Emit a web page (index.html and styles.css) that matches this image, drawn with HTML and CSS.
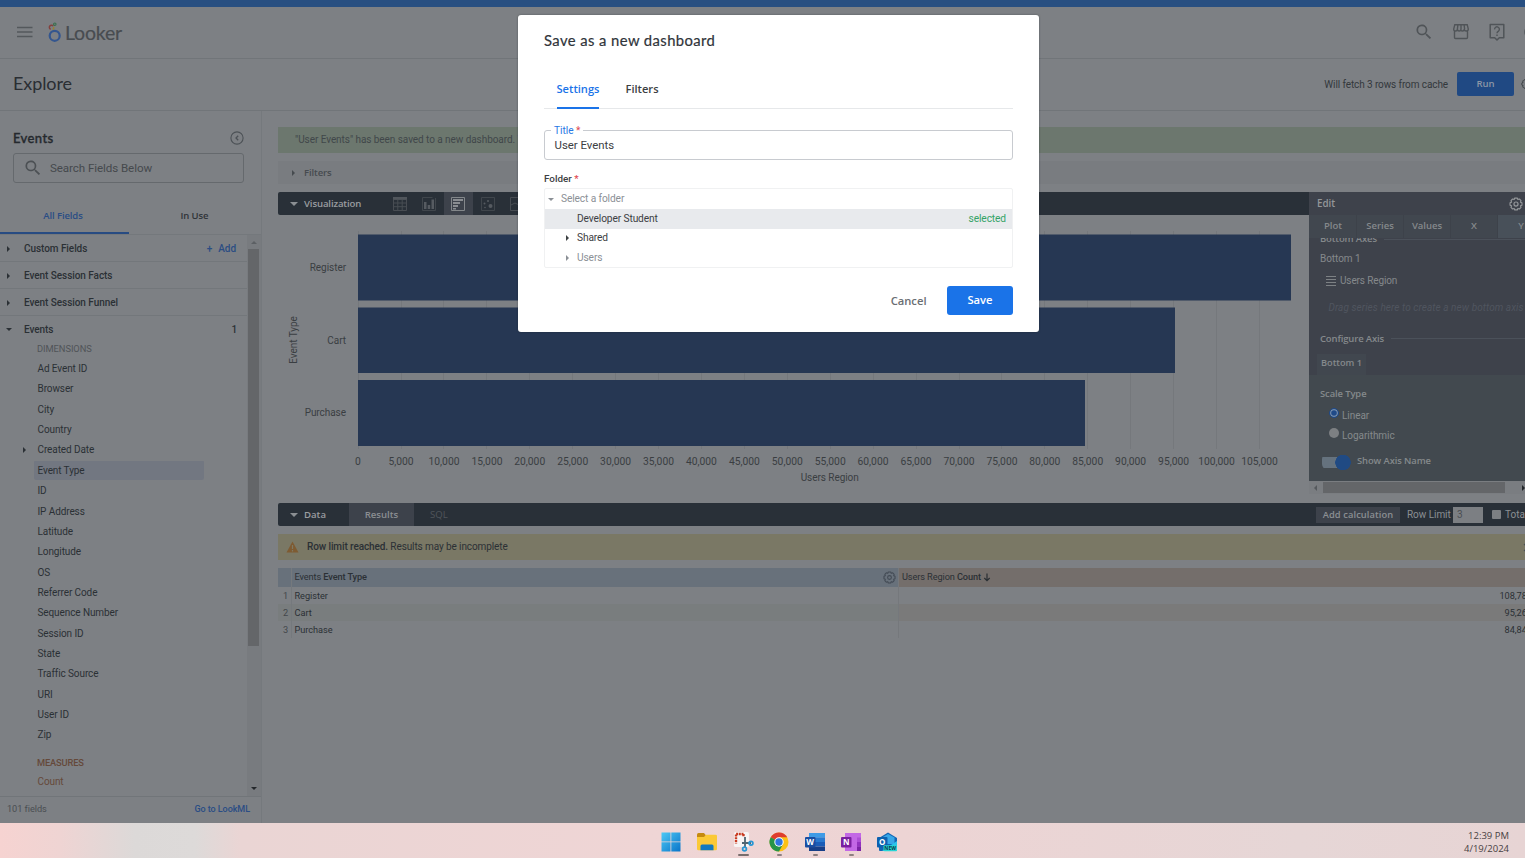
FILE: index.html
```html
<!DOCTYPE html>
<html lang="en">
<head>
<meta charset="utf-8">
<title>Looker - Explore</title>
<link rel="stylesheet" href="styles.css">
</head>
<body>
<svg class="defs" width="0" height="0">
  <symbol id="search" viewBox="0 0 24 24"><path d="M15.500 14h-.8l-.3-.3a6.500 6.500 0 1 0-.7.700l.3.300v.8l5 5 1.500-1.500zm-6 0a4.500 4.500 0 1 1 0-9 4.500 4.500 0 0 1 0 9z"/></symbol>
  <symbol id="gear" viewBox="0 0 24 24"><path fill="none" stroke="currentColor" stroke-width="2" stroke-linejoin="round" d="M9.800 1.800h4.400l1 2.500 2.700-.9 2.700 2.700-.9 2.700 2.500 1v4.400l-2.500 1 .9 2.700-2.700 2.700-2.700-.9-1 2.500H9.800l-1-2.500-2.700.9-2.700-2.700.9-2.700-2.500-1V9.800l2.500-1-.9-2.700 2.700-2.700 2.700.9z"/><circle cx="12" cy="12" r="3.500" fill="none" stroke="currentColor" stroke-width="2"/></symbol>
</svg>
<div class="app">
  <div class="strip"></div>
  <header class="header">
    <svg class="burger" width="16" height="12" viewBox="0 0 16 12"><path d="M0 1.500h15.500M0 6h15.500M0 10.500h15.500" stroke="#54585c" stroke-width="1.300"/></svg>
    <svg class="logo" width="14" height="21" viewBox="0 0 14 21"><circle cx="6.700" cy="13.800" r="5" fill="none" stroke="#34568f" stroke-width="2.200"/><path d="M2.700 7.300a2.100 2.100 0 1 1 2.500-3.100" fill="none" stroke="#84413e" stroke-width="1.500"/><path d="M5.400 4.800a2 2 0 0 1-.8 2.700" fill="none" stroke="#94803a" stroke-width="1.500"/><circle cx="6.800" cy="2.200" r="1.200" fill="none" stroke="#3b7050" stroke-width="1.200"/></svg>
    <span class="brand">Looker</span>
    <div class="header-icons">
      <svg width="20" height="20"><use href="#search"/></svg>
      <svg width="18" height="18" viewBox="0 0 18 18"><path d="M2.500 8v6.500q0 1 1 1h11q1 0 1-1V8M2.800 1.700h12.400L16.300 6q0 2-2 2t-2-2q0 2-1.900 2T9 6q0 2-1.800 2t-1.800-2q0 2-1.900 2t-1.800-2zM5.900 1.700L5.400 6M9 1.700V6M12.100 1.700l.5 4.300" fill="none" stroke="#505458" stroke-width="1.400"/></svg>
      <svg width="18" height="20" viewBox="0 0 18 20"><path d="M2.200 2.500h13.600v13.200h-4.500L9 18l-2.300-2.300H2.200z" fill="none" stroke="#505458" stroke-width="1.500" stroke-linejoin="round"/><path d="M6.600 7.400a2.400 2.400 0 1 1 3.900 1.700Q9 10.200 9 11.300M9 12.500V14" fill="none" stroke="#505458" stroke-width="1.400"/></svg>
      <svg width="14" height="14" viewBox="0 0 14 14"><circle cx="7" cy="7" r="6" fill="none" stroke="#505458" stroke-width="1.500"/></svg>
    </div>
  </header>
  <div class="titlebar">
    <h1 class="page-title">Explore</h1>
    <span class="fetch">Will fetch 3 rows from cache</span>
    <span class="run">Run</span>
    <svg class="cut-gear" width="12" height="12"><use href="#gear"/></svg>
  </div>
  <div class="body">
    <aside class="side">
      <div class="side-head"><span class="side-title">Events</span>
        <svg width="14" height="14" viewBox="0 0 14 14"><circle cx="7" cy="7" r="6.100" fill="none" stroke="#4c5156" stroke-width="1.100"/><path d="M8.200 4.700L6 7l2.200 2.300" fill="none" stroke="#4c5156" stroke-width="1.300"/></svg>
      </div>
      <div class="search"><svg width="20" height="20"><use href="#search"/></svg><span>Search Fields Below</span></div>
      <div class="side-tabs"><span class="side-tab on">All Fields</span><span class="side-tab">In Use</span></div>
      <div class="side-body">
        <div class="list">
          <div class="group"><i class="tri right"></i><span>Custom Fields</span><span class="add"><b>+</b>Add</span></div>
          <div class="group"><i class="tri right"></i><span>Event Session Facts</span></div>
          <div class="group"><i class="tri right"></i><span>Event Session Funnel</span></div>
          <div class="group open"><i class="tri down"></i><span>Events</span><span class="count">1</span></div>
          <div class="label">DIMENSIONS</div>
          <div class="field">Ad Event ID</div>
          <div class="field">Browser</div>
          <div class="field">City</div>
          <div class="field">Country</div>
          <div class="field nested"><i class="tri right"></i>Created Date</div>
          <div class="field sel">Event Type</div>
          <div class="field">ID</div>
          <div class="field">IP Address</div>
          <div class="field">Latitude</div>
          <div class="field">Longitude</div>
          <div class="field">OS</div>
          <div class="field">Referrer Code</div>
          <div class="field">Sequence Number</div>
          <div class="field">Session ID</div>
          <div class="field">State</div>
          <div class="field">Traffic Source</div>
          <div class="field">URI</div>
          <div class="field">User ID</div>
          <div class="field">Zip</div>
          <div class="label measures">MEASURES</div>
          <div class="field measure">Count</div>
        </div>
        <div class="vscroll"><i class="tri up"></i><div class="vthumb"></div><i class="tri down"></i></div>
      </div>
      <div class="side-foot"><span>101 fields</span><span class="link">Go to LookML</span></div>
    </aside>
    <main class="main">
      <div class="banner">"User Events" has been saved to a new dashboard. <span class="link">View</span></div>
      <div class="filters"><i class="tri right"></i><span>Filters</span></div>
      <div class="viz">
        <div class="viz-left">
          <div class="bar"><i class="tri down"></i><span class="bar-title viz-title">Visualization</span>
            <div class="viz-icons">
              <span><svg width="14" height="14" viewBox="0 0 14 14"><path d="M.5.500h13v13H.5zM.5 2.500h13M.5 6h13M.5 9.700h13M4.800 2v11.500M9.200 2v11.500" fill="none" stroke="#484d53"/><path d="M0 0h14v2.500H0z" fill="#51565c"/></svg></span>
              <span><svg width="14" height="14" viewBox="0 0 14 14"><path d="M13.500 1v12.500H.5V.5h10" fill="none" stroke="#40464c"/><path d="M2 5h2.500v7H2zM5.700 8h2.500v4H5.700zM9.500 2.500H12V12H9.500z" fill="#565b61"/></svg></span>
              <span class="on"><svg width="14" height="14" viewBox="0 0 14 14"><path d="M.5.500h13v13H.5z" fill="none" stroke="#83878a"/><path d="M2 2h10v2H2zM2 5h7v2H2zM2 8h5v2H2zM2 11h3v1.500H2z" fill="#8a8d91"/></svg></span>
              <span><svg width="14" height="14" viewBox="0 0 14 14"><path d="M.5.500h13v13H.5z" fill="none" stroke="#40464c"/><circle cx="9.500" cy="9" r="2" fill="#565b61"/><circle cx="3.500" cy="6.500" r="1" fill="#565b61"/><circle cx="7" cy="4" r="1" fill="#565b61"/><circle cx="4" cy="10.500" r=".8" fill="#565b61"/></svg></span>
              <span><svg width="14" height="14" viewBox="0 0 14 14"><path d="M.5.500h13v13H.5zM1 8l4-2 4 2 4-4" fill="none" stroke="#484d53"/></svg></span>
            </div>
          </div>
          <svg class="chart" width="1031" height="288" viewBox="278 215 1031 288">
            <g class="grid"><path d="M358.500 231V449M401.500 231V449M443.500 231V449M486.500 231V449M529.500 231V449M572.500 231V449M615.500 231V449M658.500 231V449M701.500 231V449M744.500 231V449M787.500 231V449M830.500 231V449M873.500 231V449M916.500 231V449M959.500 231V449M1001.500 231V449M1044.500 231V449M1087.500 231V449M1130.500 231V449M1173.500 231V449M1216.500 231V449M1259.500 231V449"/></g>
            <g fill="#263753"><rect x="358" y="234.500" width="933" height="66"/><rect x="358" y="307.500" width="817" height="65.500"/><rect x="358" y="380" width="727" height="66"/></g>
            <g class="names" text-anchor="end"><text x="346" y="271">Register</text><text x="346" y="344">Cart</text><text x="346" y="416">Purchase</text></g>
            <g class="names"><text text-anchor="middle" transform="translate(297 340) rotate(-90)">Event Type</text></g>
            <g text-anchor="middle">
              <text x="358" y="465">0</text><text x="401" y="465">5,000</text><text x="444" y="465">10,000</text><text x="487" y="465">15,000</text><text x="529.700" y="465">20,000</text><text x="572.700" y="465">25,000</text><text x="615.600" y="465">30,000</text><text x="658.500" y="465">35,000</text><text x="701.400" y="465">40,000</text><text x="744.400" y="465">45,000</text><text x="787.300" y="465">50,000</text><text x="830.200" y="465">55,000</text><text x="873" y="465">60,000</text><text x="916" y="465">65,000</text><text x="959" y="465">70,000</text><text x="1002" y="465">75,000</text><text x="1044.800" y="465">80,000</text><text x="1087.700" y="465">85,000</text><text x="1130.600" y="465">90,000</text><text x="1173.600" y="465">95,000</text><text x="1216.500" y="465">100,000</text><text x="1259.500" y="465">105,000</text>
            </g>
            <g class="names"><text text-anchor="middle" x="829.700" y="480.500">Users Region</text></g>
          </svg>
        </div>
        <section class="edit">
          <div class="edit-head"><span>Edit</span><svg width="14" height="14"><use href="#gear"/></svg></div>
          <div class="edit-tabs"><span>Plot</span><span>Series</span><span>Values</span><span>X</span><span class="on">Y</span></div>
          <div class="edit-upper">
            <div class="rule-row first"><span>Bottom Axes</span><hr></div>
            <div class="bottom1">Bottom 1</div>
            <div class="series"><svg width="10" height="10" viewBox="0 0 10 10"><path d="M0 .500h10M0 3.500h10M0 6.500h10M0 9.500h10" stroke="#7d8184" stroke-width="1"/></svg>Users Region</div>
            <div class="drag">Drag series here to create a new bottom axis</div>
            <div class="rule-row second"><span>Configure Axis</span><hr></div>
            <div class="axis-tab">Bottom 1</div>
          </div>
          <div class="edit-lower">
            <div class="scale">Scale Type</div>
            <div class="radio"><i class="dot checked"></i><span>Linear</span></div>
            <div class="radio"><i class="dot"></i><span>Logarithmic</span></div>
            <div class="switch-row"><i class="switch"></i><span>Show Axis Name</span></div>
          </div>
          <div class="hscroll"><i class="tri left"></i><div class="hthumb"></div><i class="tri right"></i></div>
        </section>
      </div>
      <div class="bar data"><i class="tri down"></i><span class="bar-title">Data</span><span class="results">Results</span><span class="sql">SQL</span>
        <div class="data-right"><span class="calc">Add calculation</span><span class="rl">Row Limit</span><span class="num">3</span><i class="check"></i><span>Totals</span></div>
      </div>
      <div class="warn"><svg width="13" height="12" viewBox="0 0 13 12"><path d="M6.500.5L12.500 11.500H.5z" fill="#7e5b32"/><path d="M6.500 4v4M6.500 9v1.400" stroke="#7d7a65" stroke-width="1.200"/></svg><span><b>Row limit reached.</b> Results may be incomplete</span><svg class="close" width="9" height="9" viewBox="0 0 9 9"><path d="M1 1l7 7M8 1L1 8" stroke="#4c5156" stroke-width="1.200"/></svg></div>
      <div class="table">
        <div class="tr th"><span class="idx"></span><span class="c1">Events&nbsp;<b>Event Type</b><svg width="13" height="13"><use href="#gear"/></svg></span><span class="c2">Users Region&nbsp;<b>Count</b><svg width="8" height="9" viewBox="0 0 8 9"><path d="M4 .5v7M1.300 5L4 7.700 6.700 5" fill="none" stroke="#2a2f34" stroke-width="1.200"/></svg></span></div>
        <div class="tr"><span class="idx">1</span><span class="c1">Register</span><span class="c2 n">108,785</span></div>
        <div class="tr alt"><span class="idx">2</span><span class="c1">Cart</span><span class="c2 n">95,267</span></div>
        <div class="tr"><span class="idx">3</span><span class="c1">Purchase</span><span class="c2 n">84,841</span></div>
      </div>
    </main>
  </div>
  <footer class="taskbar">
    <div class="apps">
      <span class="app-icon"><svg width="20" height="20" viewBox="0 0 20 20"><defs><linearGradient id="w" x1="0" y1="0" x2="1" y2="1"><stop offset="0" stop-color="#4cc9f5"/><stop offset="1" stop-color="#0a74c9"/></linearGradient></defs><path d="M.5.500h9v9h-9zM10.300.5h9.200v9h-9.200zM.5 10.300h9v9.200h-9zM10.300 10.300h9.200v9.200h-9.200z" fill="url(#w)"/></svg></span>
      <span class="app-icon"><svg width="20" height="20" viewBox="0 0 20 20"><path d="M0 2.500Q0 1 1.500 1H7l2 2.500V7H0z" fill="#c58a10"/><path d="M0 5h7l2-2.300h9.500Q20 2.700 20 4v13q0 1.300-1.500 1.300h-17Q0 18.300 0 17z" fill="#fbc936"/><path d="M3.500 18.300V14q0-1.500 1.500-1.500h10q1.500 0 1.500 1.500v4.300z" fill="#1379bd"/></svg></span>
      <span class="app-icon wide"><svg width="21" height="20" viewBox="0 0 21 20"><rect x="1" y="0" width="15" height="15" rx="1.500" fill="#f7f4f4"/><path d="M10.500 2H3v9.500M10.500 2v3" fill="none" stroke="#c93a20" stroke-width="2.400" stroke-dasharray="2 .7"/><path d="M12 5v10M9 11h9" fill="none" stroke="#4f6573" stroke-width="1.800"/><circle cx="18" cy="11.300" r="1.900" fill="none" stroke="#2797d5" stroke-width="1.700"/><circle cx="11.500" cy="17" r="1.900" fill="none" stroke="#2797d5" stroke-width="1.700"/></svg></span>
      <span class="app-icon run-dot"><svg width="20" height="20" viewBox="0 0 20 20"><circle cx="10" cy="10" r="9.500" fill="#fbc116"/><path d="M10 10L1.770 5.250A9.500 9.500 0 0 1 18.230 5.250H10z" fill="#df3c2f"/><path d="M1.770 5.250A9.500 9.500 0 0 0 10 19.500L14 12.300 10 10z" fill="#269448"/><circle cx="10" cy="10" r="4.700" fill="#fff"/><circle cx="10" cy="10" r="3.700" fill="#2e76df"/></svg></span>
      <span class="app-icon run-dot"><svg width="20" height="20" viewBox="0 0 20 20"><path d="M4 1h16v4.700H4z" fill="#3f9be6"/><path d="M4 5.500h16V10H4z" fill="#2979cf"/><path d="M4 10h16v4.500H4z" fill="#1b5db8"/><path d="M4 14.500h16V19H4z" fill="#173f88"/><rect x="0" y="5" width="10.500" height="10.500" rx="1" fill="#1a4da0"/><text x="5.200" y="13" class="glyph">W</text></svg></span>
      <span class="app-icon run-dot"><svg width="20" height="20" viewBox="0 0 20 20"><path d="M4 1h16v18H4z" fill="#c368e5"/><path d="M16 5.500h4V10h-4z" fill="#ad4fd5"/><path d="M16 10h4v4.500h-4z" fill="#9332bf"/><path d="M16 14.500h4V19h-4z" fill="#7b22a5"/><rect x="0" y="5" width="10.500" height="10.500" rx="1" fill="#7a1fa0"/><text x="5.200" y="13" class="glyph">N</text></svg></span>
      <span class="app-icon"><svg width="21" height="20" viewBox="0 0 21 20"><path d="M2 6l9-5.500L20 6v12q0 1-1 1H3q-1 0-1-1z" fill="#1266b5"/><path d="M5 5.500L11 2l6.500 3.500V12H5z" fill="#38a7e8"/><path d="M5 19l15-10v10z" fill="#2bc3ec"/><rect x="0" y="5" width="10.500" height="10.500" rx="1" fill="#0c61b0"/><text x="5.200" y="13.200" class="glyph">O</text><rect x="6.500" y="13.300" width="13.500" height="6" rx="1" fill="#27d5d5"/><text x="13.200" y="18.300" class="glyph new">NEW</text></svg></span>
    </div>
    <div class="clock"><span>12:39 PM</span><span>4/19/2024</span></div>
  </footer>
</div>
<div class="modal">
  <h2 class="modal-title">Save as a new dashboard</h2>
  <div class="modal-tabs"><span class="modal-tab on">Settings</span><span class="modal-tab">Filters</span></div>
  <div class="input"><span class="legend">Title <em>*</em></span><span>User Events</span></div>
  <div class="folder-label">Folder <em>*</em></div>
  <div class="tree">
    <div class="node root"><i class="tri down"></i>Select a folder</div>
    <div class="node picked"><i class="tri blank"></i>Developer Student<span class="selected">selected</span></div>
    <div class="node"><i class="tri right"></i>Shared</div>
    <div class="node muted"><i class="tri right"></i>Users</div>
  </div>
  <div class="actions"><span class="cancel">Cancel</span><span class="save">Save</span></div>
</div>
</body>
</html>
```
FILE: styles.css
```css
* { box-sizing: border-box; }
body { margin: 0; width: 1525px; height: 858px; overflow: hidden; font: 10px/12px Roboto, sans-serif; color: #2b3035; background: #7d8084; }
.defs { position: absolute; }
svg { flex: none; display: block; }
h1, h2 { margin: 0; font-weight: 400; }
em { font-style: normal; color: #e0454d; }
b { font-weight: 500; }
.app { display: flex; flex-direction: column; height: 858px; }
.strip { height: 6.500px; flex: none; background: #284f81; }
.header { height: 52px; flex: none; border-bottom: 1px solid #717579; display: flex; align-items: center; padding-left: 17px; }
.logo { margin: 0 3px 0 15px; }
.brand { font: 19.500px/24px Lato, sans-serif; letter-spacing: -0.200px; color: #484c50; padding-top: 1px; -webkit-text-stroke: .2px #484c50; }
.header-icons { margin-left: auto; display: flex; flex: none; align-items: center; gap: 18px; fill: #505458; margin-right: -12.500px; }
.titlebar { height: 52px; flex: none; border-bottom: 1px solid #717579; display: flex; align-items: center; padding-left: 13px; }
.page-title { font: 18px/24px Lato, sans-serif; letter-spacing: -.1px; color: #2a2e33; margin-top: -2.500px; }
.fetch { margin-left: auto; font-size: 10px; letter-spacing: -.1px; white-space: nowrap; color: #33383c; padding-top: 1px; }
.run { width: 57px; height: 24px; margin-left: 9px; margin-right: 7px; background: #204983; border-radius: 2px; color: #8b96a6; font: 600 9.500px/24px "Open Sans", sans-serif; text-align: center; flex: none; }
.cut-gear { margin-right: -8px; color: #3d4246; }
.body { flex: 1; display: flex; min-height: 0; }
.side { width: 262px; flex: none; border-right: 1px solid #75797d; display: flex; flex-direction: column; }
.side-head { display: flex; justify-content: space-between; align-items: center; padding: 0 17px 0 13px; height: 15px; margin-top: 20px; }
.side-title { font: 500 13px/16px Lato, "Open Sans", sans-serif; color: #25292e; -webkit-text-stroke: .35px #25292e; letter-spacing: .4px; }
.search { margin: 7px 17px 0 13px; height: 30px; border: 1px solid #65696d; border-radius: 3px; display: flex; align-items: center; gap: 7px; padding-left: 9px; font-size: 11.600px; letter-spacing: -.08px; color: #45494d; fill: #4c5054; }
.side-tabs { display: flex; height: 52px; border-bottom: 1px solid #74787c; }
.side-tab { width: 129px; text-align: center; font: 600 9.500px/12px "Open Sans", sans-serif; color: #303439; padding-top: 27px; padding-left: 2px; letter-spacing: -.1px; }
.side-tab.on { color: #2a4d85; border-bottom: 2px solid #274b82; padding-right: 5px; }
.side-body { flex: 1; display: flex; min-height: 0; }
.list { width: 247px; overflow: hidden; padding-top: .5px; }
.group { height: 27px; border-bottom: 1px solid #73777b; display: flex; align-items: center; font-weight: 500; letter-spacing: -.06px; padding: 1px 11px 0 7px; }
.group .tri { margin-right: 14px; }
.group .tri.down { margin-right: 12px; margin-left: -1px; }
.group.open { border: 0; height: 26px; padding-right: 10px; }
.add { margin-left: auto; color: #2b4d83; } .add b { margin-right: 6px; }
.count { margin-left: auto; }
.tri { width: 0; height: 0; flex: none; border: 3px solid transparent; display: inline-block; }
.tri.right { border-left-color: currentColor; border-right: 0; width: 3px; }
.tri.left { border-right-color: currentColor; border-left: 0; }
.tri.down { border-top-color: currentColor; border-bottom: 0; }
.tri.up { border-bottom-color: currentColor; border-top: 0; }
.label { padding-left: 37px; height: 16px; line-height: 14px; color: #505458; font-size: 9.300px; letter-spacing: -.05px; }
.field { margin-left: 34px; width: 170px; height: 20.360px; line-height: 22.400px; padding-left: 3.500px; border-radius: 2px; letter-spacing: -.1px; }
.field.sel { background: linear-gradient(#727781, #727781) 0 1px no-repeat; }
.field.nested { margin-left: 23px; width: 181px; padding-left: 0; } .nested .tri { margin-right: 11.500px; }
.label.measures { margin-top: 11px; color: #65493a; font-weight: 500; line-height: 13px; height: 15px; letter-spacing: -.15px; }
.measure { color: #65493a; line-height: 22px; }
.vscroll { width: 14px; background: #787b7f; display: flex; flex-direction: column; align-items: center; padding: 6px 1px 6px 0; }
.vscroll .up { color: #5c6064; } .vscroll .down { margin-top: auto; color: #23272b; }
.vthumb { width: 11px; height: 397px; background: #646669; margin-top: 5px; }
.side-foot { height: 27px; border-top: 1px solid #717579; padding: 0 11px 1px 7px; display: flex; justify-content: space-between; align-items: center; font-size: 9.200px; letter-spacing: -.05px; color: #4a4e52; }
.link { color: #2a4d85; } .side-foot .link { font-weight: 500; font-size: 9px; }
.main { flex: none; width: 1263px; margin-left: 16px; padding-top: 16.500px; display: flex; flex-direction: column; overflow: hidden; }
.banner { height: 26px; line-height: 26px; background: #6c776e; padding-left: 17px; font-size: 10px; letter-spacing: -.06px; color: #41474a; }
.filters { margin-top: 8px; height: 23px; background: #797c80; display: flex; align-items: center; padding: 1px 0 0 14px; font: 600 9.500px/12px "Open Sans", sans-serif; letter-spacing: -.1px; color: #464b4f; }
.filters .tri { margin-right: 9px; }
.viz { margin-top: 8px; height: 311px; display: flex; flex: none; }
.viz-left { width: 1031px; }
.bar { height: 23px; background: #293038; color: #8b8f93; display: flex; align-items: center; padding-left: 12px; border-radius: 2px 0 0 2px; }
.bar > .tri { border-width: 4px 4px 0; }
.bar-title, .results, .sql { font: 600 9.600px/12px "Open Sans", sans-serif; margin-left: 6px; padding-top: 1px; }
.viz-title { width: 81px; letter-spacing: -.13px; }
.bar-title { color: #9a9da0; }
.viz-icons { display: flex; height: 23px; } .viz-icons span { width: 29.300px; display: grid; place-items: center; } .viz-icons .on { background: #3d424b; }
.chart text { font: 10.300px Roboto, sans-serif; fill: #3a3e42; }
.chart .names text { font-size: 10px; letter-spacing: -.05px; }
.grid path { stroke: #75787c; fill: none; }
.edit { width: 232px; height: 302px; background: #3e424b; color: #85898c; display: flex; flex-direction: column; overflow: hidden; }
.edit-head { height: 23px; flex: none; display: flex; align-items: center; justify-content: space-between; padding: 0 18.500px 0 8px; font: 600 9.800px/12px "Open Sans", sans-serif; color: #94979a; }
.edit-tabs { display: flex; flex: none; height: 23px; background: #41474f; font: 600 9.500px/22px "Open Sans", sans-serif; padding-left: 1px; }
.edit-tabs span { width: 47px; text-align: center; border-right: 1px solid #3d424a; flex: none; }
.edit-tabs .on { background: #485059; }
.edit-upper { height: 137px; flex: none; padding-left: 11px; overflow: hidden; }
.rule-row { display: flex; align-items: center; gap: 7px; font: 600 9.500px/12px "Open Sans", sans-serif; letter-spacing: -.15px; white-space: nowrap; }
.rule-row hr { flex: 1; border: 0; border-top: 1px solid #4b515a; margin: 0; }
.first { margin-top: -5px; }
.bottom1 { margin-top: 7.500px; font-size: 10px; letter-spacing: -.05px; }
.series { margin: 10px 0 0 6px; display: flex; align-items: center; gap: 4px; font-size: 10px; letter-spacing: -.13px; }
.drag { margin: 15px 0 0 8.500px; white-space: nowrap; font: italic 10px/12px Roboto, sans-serif; letter-spacing: .07px; color: #50555f; }
.second { margin-top: 19px; }
.axis-tab { margin: 9px 0 0 -3px; width: 49px; height: 22px; background: #41474f; text-align: center; font: 600 9.200px/18px "Open Sans", sans-serif; }
.edit-lower { height: 106px; flex: none; background: #42494f; padding: 13px 0 0 11px; }
.scale { font: 600 9.400px/12px "Open Sans", sans-serif; letter-spacing: -.08px; }
.radio { display: flex; gap: 3px; margin: 8px 0 0 9px; font-size: 10px; letter-spacing: -.05px; }
.radio + .radio { margin-top: 7px; }
.dot { width: 10px; height: 10px; border-radius: 50%; background: #7d8083; }
.dot.checked { background: #204a88; border: 1px solid #204a88; box-shadow: inset 0 0 0 1.200px #7890ad; }
.radio span { padding-top: 2px; height: 13px; }
.switch-row { display: flex; align-items: center; margin: 11.500px 0 0 2px; gap: 6px; font: 600 9.400px/12px "Open Sans", sans-serif; letter-spacing: -.08px; }
.switch { width: 29px; height: 17px; background: radial-gradient(circle at 21px 9.500px, #204a83 7.500px, transparent 8px), linear-gradient(#65727e, #65727e) 0 4px / 22px 11px no-repeat; border-radius: 6px; }
.switch-row span { margin-top: -1px; }
.hscroll { height: 13px; flex: none; background: #7a7d81; display: flex; align-items: center; padding-left: 5px; color: #55595d; }
.hthumb { width: 182px; height: 11px; margin: 0 16.500px 0 6px; background: #646669; } .hscroll .right { color: #23272b; }
.bar.data { flex: none; }
.results { width: 65px; height: 23px; line-height: 22px; background: #3d424b; text-align: center; margin-left: 23px; color: #8b8e92; }
.sql { margin-left: 16px; color: #50555b; font-weight: 400; }
.data-right { margin-left: auto; width: 225px; display: flex; align-items: center; font-size: 10px; flex: none; }
.calc { width: 84px; height: 16px; background: #3d424b; text-align: center; font: 600 9.300px/16px "Open Sans", sans-serif; margin-right: 7px; letter-spacing: .1px; }
.rl { width: 46px; white-space: nowrap; letter-spacing: -.05px; } .num { width: 30px; height: 16px; background: #7c7f83; color: #4a4e52; line-height: 16px; padding-left: 4px; }
.check { width: 9px; height: 9px; background: #7c7f83; border-radius: 1px; margin: 0 4px 0 9px; }
.warn { margin-top: 8px; height: 26px; flex: none; background: #7a7865; display: flex; align-items: center; padding-left: 8px; gap: 8px; font-size: 10px; letter-spacing: -.1px; }
.warn .close { margin-left: auto; margin-right: 9px; }
.table { margin-top: 8px; font-size: 9.200px; letter-spacing: -.04px; }
.tr { display: flex; height: 17.100px; align-items: center; }
.tr > span { height: 100%; display: flex; align-items: center; padding-top: 1px; }
.idx { width: 14px; padding-left: 5px; border-right: 1px solid #75797d; color: #43474b; } .c1 { width: 607px; padding-left: 2.500px; border-right: 1px solid #75787c; } .c2 { flex: 1; padding-left: 3px; }
.tr > .n { justify-content: flex-end; padding-right: 9px; }
.c1 svg { margin-left: auto; margin-right: 2px; color: #434b55; } .c2 svg { margin-left: 2px; }
.th { height: 18.500px; letter-spacing: -.1px; } .tr.th > span { padding-top: 0; } .th .idx, .th .c1 { background: #68717b; } .th .c2 { background: #746e6b; }
.alt { background: #797d7e; } .alt .c2 { background: #7a7a7a; }
.taskbar { height: 35.500px; flex: none; display: flex; align-items: center; background: linear-gradient(90deg, #f6d3d1 0, #efd4d3 60px, #dcd9d8 135px, #dddad9 195px, #ead5d4 240px, #efd5d5 650px, #edd4d4 900px, #e6d6d6 1300px, #e7d4d4 1525px); }
.apps { display: flex; gap: 16px; margin-left: 661px; }
.app-icon { width: 20px; height: 28px; padding-top: 6px; display: flex; flex-direction: column; align-items: center; gap: 2px; }
.run-dot::after { content: ""; flex: none; width: 5px; height: 2px; background: #8d8080; border-radius: 1px; }
.wide::after { content: ""; flex: none; width: 11px; height: 2px; background: #786d6d; border-radius: 1px; }
.glyph { font: 700 8px "Open Sans", sans-serif; fill: #fff; text-anchor: middle; } .glyph.new { font-size: 5px; fill: #073b4a; }
.clock { margin-left: auto; margin-right: 16px; display: flex; flex-direction: column; text-align: right; font: 9.500px/13px "Open Sans", sans-serif; color: #484142; padding-top: 3.500px; }
.modal { position: absolute; left: 518px; top: 15px; width: 521px; height: 317px; background: #fff; border-radius: 3px; padding: 16.400px 26px 0; color: #3c4043; box-shadow: 0 0 2px rgba(30, 35, 40, .5); }
.modal-title { font: 400 14.800px/18px Lato, sans-serif; color: #30343a; letter-spacing: .42px; -webkit-text-stroke: .2px #30343a; }
.modal-tabs { margin-top: 26.600px; height: 33px; border-bottom: 1px solid #e6e8ea; display: flex; gap: 26px; padding-left: 12.500px; }
.modal-tab { font: 600 11.100px/26px "Open Sans", sans-serif; height: 33px; }
.modal-tab.on { color: #1a73e8; border-bottom: 2.500px solid #1a73e8; border-radius: 2px 2px 0 0; }
.input { margin-top: 21px; height: 30px; border: 1px solid #c8cbd0; border-radius: 3px; position: relative; padding-left: 9.500px; font-size: 11.400px; line-height: 28.500px; }
.legend { position: absolute; left: 6px; top: -6.500px; background: #fff; padding: 0 3px; font-size: 10.100px; line-height: 14px; color: #2878e4; }
.folder-label { margin-top: 12.500px; font-size: 9.900px; line-height: 14px; font-weight: 500; }
.tree { margin-top: 2px; border: 1px solid #f0f1f2; border-radius: 2px; height: 80px; font-size: 10.200px; letter-spacing: -.12px; }
.node { height: 19.600px; display: flex; align-items: center; padding-left: 21px; }
.node .tri { margin-right: 8px; } .node .blank { width: 3px; border-width: 3px 0; }
.node.root { padding-left: 3px; color: #8b9096; } .node.root .tri { margin-right: 7px; }
.node.picked { background: #e8eaed; } .selected { margin-left: auto; margin-right: 6px; color: #34a367; }
.node.muted { color: #8b9096; }
.actions { display: flex; justify-content: flex-end; align-items: center; margin-top: 18px; gap: 20.500px; font: 600 11.200px/27.500px "Open Sans", sans-serif; }
.cancel { color: #6a6e73; }
.save { width: 66px; height: 29px; background: #1a73e8; color: #fff; text-align: center; border-radius: 3px; }
```
